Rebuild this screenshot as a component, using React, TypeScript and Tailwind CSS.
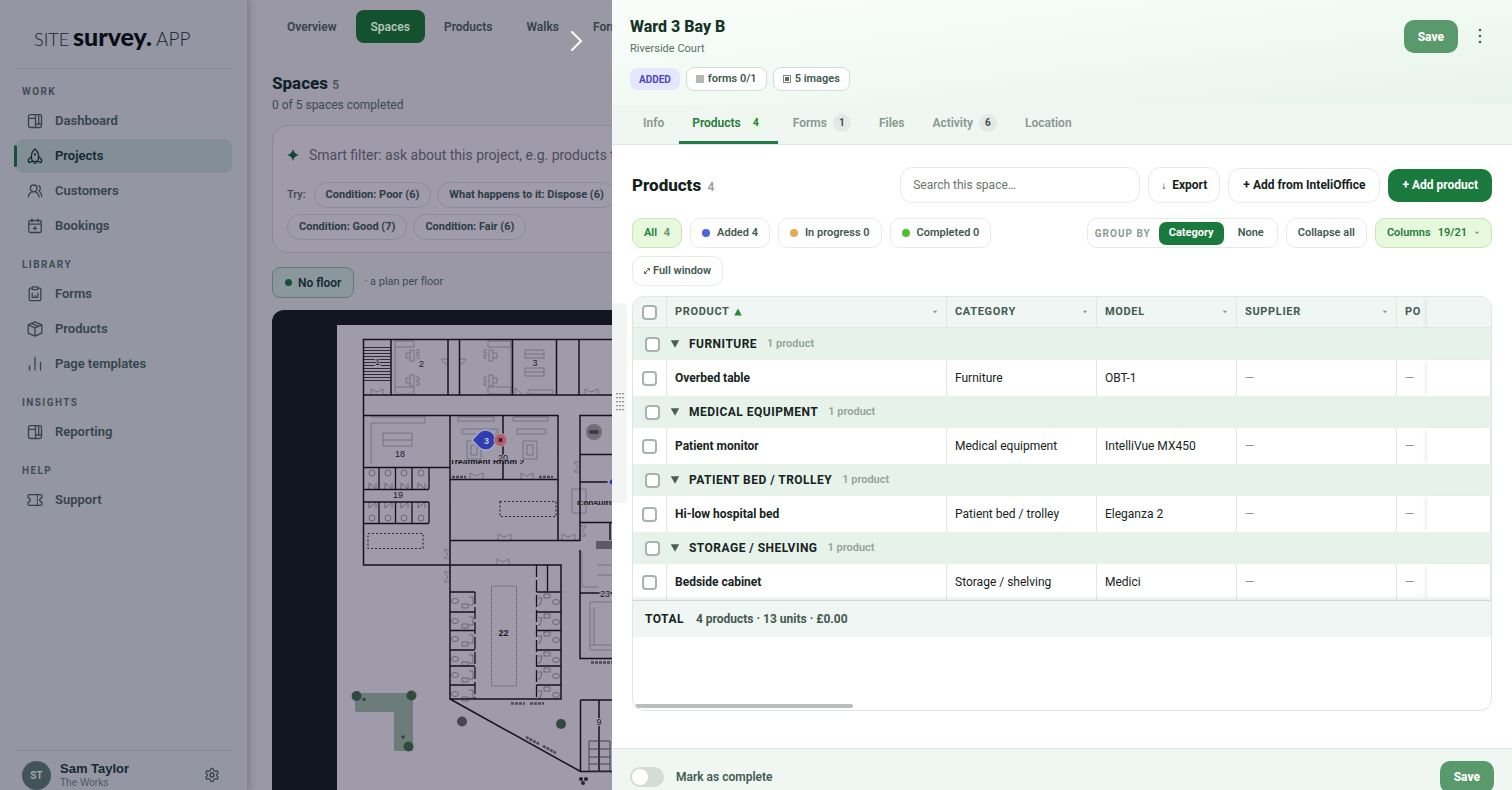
import type { ReactNode } from "react";
import clsx from "clsx";
import { Settings, UsersRound } from "lucide-react";

type NavItem = {
  label: string;
  icon: ReactNode;
  active?: boolean;
};

function LineIcon({ children }: { children: ReactNode }) {
  return (
    <svg
      viewBox="0 0 16 16"
      className="size-4"
      fill="none"
      stroke="currentColor"
      strokeWidth="1.3"
      strokeLinecap="round"
      strokeLinejoin="round"
      aria-hidden="true"
    >
      {children}
    </svg>
  );
}

const panelsIcon = (
  <LineIcon>
    <rect x="1.5" y="1.7" width="13" height="12.8" rx="1.8" />
    <path d="M8.5 1.7v12.8M1.5 5.3h7M8.5 11h3.2V1.7M11.7 11h2.8" />
  </LineIcon>
);

const rocketIcon = (
  <LineIcon>
    <path d="M8 .9C5.6 2.8 4.4 5.6 4.4 8.6c0 2 .5 3.7 1.1 4.9h5c.6-1.2 1.1-2.9 1.1-4.9C11.6 5.6 10.4 2.8 8 .9Z" />
    <path d="M4.5 8.4 1.8 11.2c-.5.6-.4 2.5.3 3.5l3.3-1.3M11.5 8.4l2.7 2.8c.5.6.4 2.5-.3 3.5l-3.3-1.3M7 15.2h2" />
    <circle cx="8" cy="6.5" r=".5" fill="currentColor" />
  </LineIcon>
);

const calendarIcon = (
  <LineIcon>
    <rect x="1.8" y="2.5" width="12.4" height="12" rx="1.6" />
    <path d="M1.8 6.2h12.4M5 .9v3M11 .9v3M8 8.6v3.4M6.3 10.3h3.4" />
  </LineIcon>
);

const clipboardIcon = (
  <LineIcon>
    <path d="M5 2.2H3.6c-.9 0-1.4.6-1.4 1.4v9.7c0 .9.6 1.4 1.4 1.4h8.8c.9 0 1.4-.6 1.4-1.400V3.6c0-.8-.5-1.4-1.400-1.4H11" />
    <rect x="5" y=".9" width="6" height="2.7" rx="1" />
    <path d="M5.200 7.400v4h5.600V7.400M8 9.600v1.800" />
  </LineIcon>
);

const boxIcon = (
  <LineIcon>
    <path d="M8 .8 14.8 3.800v8.400L8 15.200l-6.800-3V3.800ZM1.200 3.800 8 6.800l6.800-3M8 6.800v8.400M4.600 2.300l6.800 3" />
  </LineIcon>
);

const barsIcon = (
  <LineIcon>
    <path d="M2.500 10v4M8 1.500V14M13.500 6.500V14" />
  </LineIcon>
);

const usersIcon = <UsersRound className="size-4" strokeWidth={2} />;

const ticketIcon = (
  <LineIcon>
    <path d="M2.200 2.600h11.600c.7 0 1.100.5 1.100 1.100v2.200a2.100 2.100 0 0 0 0 4.200v2.200c0 .7-.4 1.100-1.100 1.100H2.200c-.7 0-1.100-.4-1.100-1.100v-2.200a2.100 2.100 0 0 0 0-4.200V3.700c0-.6.400-1.100 1.100-1.100Z" />
    <path d="M10.400 3v2M10.400 7v2M10.400 11v2" />
  </LineIcon>
);

const navSections: { title: string; items: NavItem[] }[] = [
  {
    title: "WORK",
    items: [
      { label: "Dashboard", icon: panelsIcon },
      { label: "Projects", icon: rocketIcon, active: true },
      { label: "Customers", icon: usersIcon },
      { label: "Bookings", icon: calendarIcon },
    ],
  },
  {
    title: "LIBRARY",
    items: [
      { label: "Forms", icon: clipboardIcon },
      { label: "Products", icon: boxIcon },
      { label: "Page templates", icon: barsIcon },
    ],
  },
  { title: "INSIGHTS", items: [{ label: "Reporting", icon: panelsIcon }] },
  { title: "HELP", items: [{ label: "Support", icon: ticketIcon }] },
];

const projectTabs = ["Overview", "Spaces", "Products", "Walks", "Forms"];

const suggestions = [
  "Condition: Poor (6)",
  "What happens to it: Dispose (6)",
  "Condition: Good (7)",
  "Condition: Fair (6)",
];

const drawerTabs = [
  { label: "Info" },
  { label: "Products", count: 4, active: true },
  { label: "Forms", count: 1 },
  { label: "Files" },
  { label: "Activity", count: 6 },
  { label: "Location" },
];

const statusFilters = [
  { label: "Added 4", dot: "bg-[#4a66e0]" },
  { label: "In progress 0", dot: "bg-[#e5ab52]" },
  { label: "Completed 0", dot: "bg-[#55c02c]" },
];

const columns = ["CATEGORY", "MODEL", "SUPPLIER"];

const groups = [
  { name: "FURNITURE", product: "Overbed table", category: "Furniture", model: "OBT-1" },
  { name: "MEDICAL EQUIPMENT", product: "Patient monitor", category: "Medical equipment", model: "IntelliVue MX450" },
  { name: "PATIENT BED / TROLLEY", product: "Hi-low hospital bed", category: "Patient bed / trolley", model: "Eleganza 2" },
  { name: "STORAGE / SHELVING", product: "Bedside cabinet", category: "Storage / shelving", model: "Medici" },
];

function Logo() {
  return (
    <svg viewBox="0 -6 160 42" className="h-[42px] w-40" role="img" aria-label="SITE survey. APP">
      <g fill="#1b1f2b" fontFamily="Lato">
        <text x="0" y="23" fontWeight="300" fontSize="18">SITE</text>
        <text x="39" y="23" fontWeight="900" fontSize="25" fill="#0a0c14">survey.</text>
        <text x="122" y="23" fontWeight="300" fontSize="19">APP</text>
      </g>
    </svg>
  );
}

function Sidebar() {
  return (
    <aside className="z-10 flex w-62 shrink-0 flex-col border-r border-[#858794] bg-[#9496a3] pr-[15px] pl-4 shadow-[2px_0_6px_rgba(40,40,60,0.25)]">
      <div className="flex h-[69px] shrink-0 items-center border-b border-[#838693] pt-2 pl-[18px]">
        <Logo />
      </div>
      <nav className="mt-[15px] flex flex-1 flex-col gap-3.5">
        {navSections.map((section) => (
          <div key={section.title}>
            <h2 className="mb-1 h-4 pl-1.5 text-[10px] leading-4 font-bold tracking-[0.14em] text-[#414c57]">
              {section.title}
            </h2>
            <ul className="flex flex-col gap-px">
              {section.items.map((item) => (
                <li key={item.label} className="relative">
                  {item.active && (
                    <span className="absolute top-1.5 -left-0.5 h-[22px] w-[3px] rounded-full bg-[#14523a]" />
                  )}
                  <a
                    href="#"
                    className={clsx(
                      "flex h-[34px] items-center gap-3 rounded-lg pl-[11px] text-[13px] font-semibold",
                      item.active ? "bg-[#848e97] text-[#122a32]" : "text-[#34444c]",
                    )}
                  >
                    {item.icon}
                    {item.label}
                  </a>
                </li>
              ))}
            </ul>
          </div>
        ))}
      </nav>
      <div className="flex h-10 shrink-0 items-start gap-2 border-t border-[#858894] pt-2.5 pl-1.5">
        <span className="flex size-[29px] shrink-0 items-center justify-center rounded-full bg-[#43535a] text-[10px] font-bold text-[#9ea5ae]">
          ST
        </span>
        <div className="pl-px font-['Liberation_Sans',sans-serif]">
          <p className="text-[13px] leading-4 font-bold text-[#16292f]">Sam Taylor</p>
          <p className="text-[10px] leading-3 text-[#4b5660]">The Works</p>
        </div>
        <button type="button" aria-label="Settings" className="mt-1.5 mr-3 ml-auto text-[#34444c]">
          <Settings className="size-4" />
        </button>
      </div>
    </aside>
  );
}

const cubicleRows = [592, 612, 630, 650, 666, 685];
const stallColumns = [363, 379, 395, 412];

function FloorPlan() {
  return (
    <svg
      viewBox="337 325 275 465"
      className="h-[465px] w-[275px] shrink-0 bg-[#9f9bab]"
      fontFamily="Liberation Sans"
      role="img"
      aria-label="Floor plan"
    >
      <g fill="none" stroke="#6b6977" strokeWidth="0.8">
        <path d="M395 341v52M395 341h19v6h-19M395 387h19v7h-19M488 341h23v6h-23zM488 387h23v7h-23zM511 341v52" />
        <path d="M410 350h4v11h-4zM410 353h-4v5h4M410 375h4v11h-4zM410 378h-4v5h4M489 350h4v11h-4zM493 353h4v5h-4M489 375h4v11h-4zM493 378h4v5h-4" />
        <path d="M416 350h3v3h-3M416 355h3v3h-3M416 377h3v3h-3M416 382h3v3h-3M487 350h-3v3h3M487 355h-3v3h3M487 377h-3v3h3M487 382h-3v3h3" />
        <path d="M525 350h19v8h-19zM525 354h19M525 368h19v8h-19zM525 372h19M528 390h25v4h-25z" />
        <path d="M371 417h54v6h-54v41M383 433h29v13h-29zM383 440h29M458 417h36v4h-36zM462 429h36v5h-36zM513 417h35v4h-35zM517 429h29v5h-29z" />
        <path d="M467 441h14v18h-14zM471 445h6v10h-6zM523 441h14v18h-14zM527 445h6v10h-6zM572 489h14v24h-14z" />
        <path d="M371 394v-5l6 3 6-3v5M448 359h-7l4 5h3M459 359h7l-4 5h-3M515 394v-6l7 6M585 394v-5l6 3 7-3v5M470 479v-6l6 3 7-3v6M521 479v-6l6 3 6-3v6M498 540v-6l6 3 7-3v6M562 540v-6l6 3 7-3v6M497 565v-6l6 3 6-3v6" />
        <path d="M450 550h-6l4 4-4 4h6M450 572h-6l4 5-4 5h6M580 462h-6l4 5-4 5h6M580 526h6l-4 5 4 5h-6" />
        <path d="M582 551v36h16M597 565h20v10h-20M590 602h25v48h-25zM594 607v38M590 645h25" />
        <rect x="491.5" y="586" width="25" height="100" stroke="#45434f" strokeDasharray="1 1" />
      </g>
      <g fill="none" stroke="#2f2d38" strokeWidth="1.2" strokeDasharray="2 2">
        <rect x="500" y="501.5" width="56" height="15" />
        <rect x="368" y="533.5" width="55" height="15" />
      </g>
      <g fill="none" stroke="#62606e" strokeWidth="0.9">
        {stallColumns.map((x) => (
          <g key={x}>
            <circle cx={x + 9} cy="473" r="3" />
            <circle cx={x + 9} cy="518" r="3" />
            <path d={`M${x + 6} 489v-6l7 6v-6M${x + 6} 502v6l7-6v6`} />
          </g>
        ))}
        {cubicleRows.map((y) => (
          <g key={y}>
            <ellipse cx="455" cy={y + 9} rx="3.5" ry="2.5" />
            <path d={`M462 ${y + 12}h6v4h-6zM469 ${y + 5}h4v8h-4`} />
            <ellipse cx="556" cy={y + 10} rx="3.5" ry="2.5" />
            <path d={`M544 ${y + 2}h6v4h-6zM538 ${y + 6}h4l-2 7h-2`} />
          </g>
        ))}
      </g>
      <path
        fill="none"
        stroke="#14131d"
        strokeWidth="1.5"
        d="M612 339.5H363.5V565H561V699H450V415M391 339.5V395M448 339.5V395M459.5 339.5V395M512.5 339.5V395M556.5 339.5V395M579 339.5V395M363.5 395H612M363.5 415.5H558V541M612 415.5H580V541M503 415.5V479M363.5 467.5H450M450 479.5H558M580 454.5H612M580 482H612M580 522.5H612M450 540.5H580M610 522v18M580 550V658.5H612M580 593H612M450 699 580.5 771.5H612M580.5 771.5V700M580.5 700H612M599 700V771"
      />
      <path
        fill="none"
        stroke="#14131d"
        strokeWidth="1.3"
        d="M363.5 489.5H429M363.5 502H429M363.5 523.5H429M379 467V489M395.5 467V489M412 467V489M429 467V489M379 502V523M395.5 502V523M412 502V523M429 502V523M547.5 565V592"
      />
      <path fill="none" stroke="#14131d" strokeWidth="1.3" strokeDasharray="12 3" d="M475 592V699M536.5 565V699" />
      <path
        fill="none"
        stroke="#14131d"
        strokeWidth="1.3"
        d="M450 592h25M450 612h25M450 630.5h25M450 650h25M450 666h25M450 685h25M536.5 592H561M536.5 612H561M536.5 630.5H561M536.5 650H561M536.5 666H561M536.5 685H561"
      />
      <path
        stroke="#2c2a36"
        strokeWidth="1"
        d="M364 347.5h27M364 350.5h27M364 353.5h27M364 356.5h27M364 359.5h27M364 362.5h27M364 365.5h27M364 368.5h27M364 371.5h27M364 374.5h27M364 377.5h27M364 380.5h27"
      />
      <path fill="none" stroke="#3b3945" strokeWidth="0.9" d="M589 741h21v30h-21zM589 749h21M589 757h21M589 764h21" />
      <path
        stroke="#4b4955"
        strokeWidth="2.5"
        strokeDasharray="3 1"
        d="M452 477h14M539 477h14M511 703.500h14M530 703.500h14M526 737l13 7M543 746l13 7M591 662.500h21"
      />
      <rect x="596" y="541" width="16" height="8" fill="#5b5967" />

      <circle cx="594" cy="432" r="8" fill="#706e79" />
      <rect x="589" y="430" width="10" height="4" rx="2" fill="#3c3a44" />

      <path d="M355 695q0-2 2-2h54q2 0 2 2v56h-17q-2 0-2-2v-37h-37q-2 0-2-2Z" fill="#6b7c7b" />
      <g fill="#33493f">
        <circle cx="356.5" cy="696" r="5" />
        <circle cx="411.5" cy="695.5" r="5" />
        <circle cx="408.5" cy="746.5" r="5" />
        <circle cx="561" cy="724" r="5" />
        <circle cx="364" cy="699.5" r="1.8" />
        <circle cx="403" cy="737" r="1.8" />
      </g>
      <circle cx="462" cy="721.5" r="5" fill="#474753" />
      <g fill="#23222c">
        <circle cx="581" cy="779" r="2" />
        <circle cx="586" cy="779" r="2" />
        <circle cx="583" cy="783" r="2" />
      </g>

      <g fill="#1b1a24" fontSize="9" textAnchor="middle" stroke="#9f9bab" strokeWidth="2" paintOrder="stroke">
        <text x="377.5" y="365">1</text>
        <text x="421.5" y="367">2</text>
        <text x="535" y="366">3</text>
        <text x="400" y="457">18</text>
        <text x="398" y="498">19</text>
        <text x="503" y="461">20</text>
        <text x="503.5" y="636" fontWeight="bold">22</text>
        <text x="605" y="597">23</text>
        <text x="599" y="725">9</text>
      </g>

      <clipPath id="label-band">
        <rect x="445" y="460" width="90" height="4" />
        <rect x="575" y="501" width="40" height="4" />
      </clipPath>
      <g clipPath="url(#label-band)" fill="#15141e" fontSize="8.5" fontWeight="bold">
        <text x="450" y="465">Treatment Room 2</text>
        <text x="577" y="506">Consulting</text>
      </g>

      <path
        d="M472 440l7-7.5a10 10 0 1 1 0 15Z"
        fill="#2f3db0"
        stroke="#a9a9c8"
        strokeWidth="1.5"
        strokeLinejoin="round"
      />
      <path d="M608 482l6-6v12Z" fill="#2f3db0" stroke="#a9a9c8" strokeWidth="1.2" />
      <text x="486.5" y="443.5" fontSize="9" fontWeight="bold" textAnchor="middle" fill="#c3c5de">3</text>
      <circle cx="500.5" cy="440" r="6.5" fill="#b55e6c" stroke="#a29eac" />
      <path d="M498.7 438.2l3.6 3.6M502.3 438.2l-3.6 3.6" stroke="#2a1820" strokeWidth="1.5" />
    </svg>
  );
}

function ProjectPage() {
  return (
    <main className="relative flex w-91 shrink-0 flex-col overflow-hidden bg-[#9998a4] pl-6 whitespace-nowrap">
      <nav className="flex gap-1 pt-2.5">
        {projectTabs.map((tab) => (
          <a
            key={tab}
            href="#"
            className={clsx(
              "flex h-[33px] shrink-0 items-center rounded-lg px-[15px] text-xs font-semibold",
              tab === "Spaces" ? "bg-[#14512f] text-[#b4c4bd]" : "text-[#34424b]",
            )}
          >
            {tab}
          </a>
        ))}
      </nav>
      <button type="button" aria-label="Close panel" className="absolute top-7 left-80">
        <svg viewBox="0 0 16 26" className="h-[26px] w-4" fill="none" stroke="#fff" strokeWidth="2" strokeLinecap="round">
          <path d="M4 4l9 9-9 9" />
        </svg>
      </button>

      <h1 className="mt-7 text-[17px] leading-6 font-extrabold text-[#10222a]">
        Spaces <span className="text-xs font-semibold text-[#4a5560]">5</span>
      </h1>
      <p className="mt-0.5 text-xs leading-4 text-[#3d4953]">0 of 5 spaces completed</p>

      <section className="mt-3 w-[480px] rounded-2xl border border-[#8a8997] bg-[#9f9bab] px-3.5 pt-[15px] pb-3">
        <div className="flex h-7 items-center gap-2.5">
          <svg viewBox="0 0 12 12" className="size-3" fill="#154536" aria-hidden="true">
            <path d="M6 0Q7 5 12 6 7 7 6 12 5 7 0 6 5 5 6 0Z" />
          </svg>
          <input
            type="text"
            aria-label="Smart filter"
            placeholder="Smart filter: ask about this project, e.g. products to replace"
            className="flex-1 bg-transparent text-sm text-[#4b4c5b] outline-none placeholder:text-[#4b4c5b]"
          />
        </div>
        <div className="mt-[13px] flex w-[340px] flex-wrap gap-x-1.5 gap-y-1.5">
          <span className="mr-0.5 flex h-[26px] items-center text-[11px] font-medium text-[#3d4953]">Try:</span>
          {suggestions.map((suggestion) => (
            <button
              key={suggestion}
              type="button"
              className="h-[26px] rounded-full border border-[#8c8a99] px-[11px] text-[11px] font-bold text-[#2c3d46]"
            >
              {suggestion}
            </button>
          ))}
        </div>
      </section>

      <div className="mt-3.5 flex items-center gap-2.5">
        <button
          type="button"
          className="flex h-[31px] items-center gap-1.5 rounded-lg border border-[#5f7c77] bg-[#8a979d] px-3 text-xs font-semibold text-[#142a30]"
        >
          <span className="size-[7px] rounded-full bg-[#175038]" />
          No floor
        </button>
        <span className="text-[11px] text-[#3f4955]">· a plan per floor</span>
      </div>

      <div className="mt-3 flex flex-1 overflow-hidden rounded-tl-xl bg-[#111622] pt-[15px] pl-[65px]">
        <FloorPlan />
      </div>
    </main>
  );
}

function Checkbox({ label }: { label: string }) {
  return (
    <input
      type="checkbox"
      aria-label={label}
      className="block size-[15px] shrink-0 appearance-none rounded-[4px] border-2 border-[#a8b3ae] bg-white checked:bg-[#1a7a3e]"
    />
  );
}

function DrawerHeader() {
  return (
    <header className="border-b border-[#e0e8e3]">
      <div className="flex h-[105px] justify-between bg-linear-to-br from-[#fafdfb] via-[#f1faf3] to-[#e8f3eb] px-[18px]">
        <div className="pt-4">
          <h2 className="text-base leading-[22px] font-extrabold text-[#143526]">Ward 3 Bay B</h2>
          <p className="mt-0.5 text-[11px] leading-[18px] text-[#5b6f65]">Riverside Court</p>
          <div className="mt-[9px] flex items-center gap-1.5 text-[11px] font-semibold">
            <span className="flex h-[22px] items-center rounded-lg bg-[#e4e7fd] px-[9px] text-[10px] font-bold text-[#4a49bd]">
              ADDED
            </span>
            <span className="flex h-6 items-center gap-1 rounded-lg border border-[#d3ddd7] bg-white px-[9px] text-[#3f5a4e]">
              <span className="size-2 bg-[#b3bab6]" />
              forms 0/1
            </span>
            <span className="flex h-6 items-center gap-1 rounded-lg border border-[#d3ddd7] bg-white px-[9px] text-[#3f5a4e]">
              <span className="flex size-2 items-center justify-center border border-[#7d8b84]">
                <span className="size-1 bg-[#5c6b64]" />
              </span>
              5 images
            </span>
          </div>
        </div>
        <div className="flex items-start gap-2 pt-5">
          <button type="button" className="h-[33px] rounded-[10px] bg-[#5a996c] px-3.5 text-xs font-extrabold text-white">
            Save
          </button>
          <button type="button" aria-label="More actions" className="flex h-8 w-7 items-center justify-center">
            <svg viewBox="0 0 4 16" className="h-4 w-1" fill="#4d5f56">
              <circle cx="2" cy="2" r="1.3" />
              <circle cx="2" cy="8" r="1.3" />
              <circle cx="2" cy="14" r="1.3" />
            </svg>
          </button>
        </div>
      </div>
      <nav className="flex h-[39px] gap-0.5 bg-[#f0f6f2] pl-[18px]">
        {drawerTabs.map((tab) => (
          <a
            key={tab.label}
            href="#"
            className={clsx(
              "flex items-center gap-1.5 border-b-[3px] px-[13px] text-xs font-semibold",
              tab.active ? "border-[#237a48] text-[#237a35]" : "border-transparent text-[#87988f]",
            )}
          >
            {tab.label}
            {tab.count && (
              <span
                className={clsx(
                  "flex size-[18px] items-center justify-center rounded-full text-[10px] font-bold",
                  tab.active ? "bg-[#eafae4] text-[#237a35]" : "bg-[#e3e9e5] text-[#3f5248]",
                )}
              >
                {tab.count}
              </span>
            )}
          </a>
        ))}
      </nav>
    </header>
  );
}

function Toolbar() {
  return (
    <>
      <div className="flex h-9 items-center gap-2 text-xs font-bold text-[#14231c]">
        <h3 className="mr-auto text-[17px] font-extrabold text-[#12211b]">
          Products <span className="ml-0.5 text-xs font-semibold text-[#93a199]">4</span>
        </h3>
        <input
          type="search"
          aria-label="Search this space"
          placeholder="Search this space…"
          className="h-9 w-60 rounded-xl border border-[#e6ebe8] bg-white px-3 font-normal outline-none placeholder:text-[#6a756f]"
        />
        <button type="button" className="h-9 rounded-xl border border-[#e6ebe8] bg-white px-3">
          <span className="mr-1.5 text-[10px]">↓</span>Export
        </button>
        <button type="button" className="h-[35px] rounded-xl border border-[#e6ebe8] bg-white px-3.5">
          + Add from InteliOffice
        </button>
        <button type="button" className="h-[33px] rounded-[10px] bg-[#1a7a3e] px-3.5 text-white">
          + Add product
        </button>
      </div>

      <div className="mt-[15px] flex flex-wrap items-center gap-2 text-[11px] font-semibold text-[#435a4f]">
        <button type="button" className="h-[30px] rounded-[10px] border border-[#c4e6b8] bg-[#e6f9dd] px-[11px] text-[#237a35]">
          All <span className="ml-1 text-[#63926b]">4</span>
        </button>
        {statusFilters.map((filter) => (
          <button
            key={filter.label}
            type="button"
            className="flex h-[30px] items-center gap-[7px] rounded-[10px] border border-[#e6ebe8] bg-white px-[11px]"
          >
            <span className={clsx("size-2 rounded-full", filter.dot)} />
            {filter.label}
          </button>
        ))}
        <div className="ml-auto flex h-[30px] items-center rounded-[10px] border border-[#e6ebe8] bg-white px-[7px]">
          <span className="mr-2 text-[10px] font-bold tracking-[0.1em] text-[#8d9c94]">GROUP BY</span>
          <button type="button" className="h-[23px] rounded-[7px] bg-[#1a7a3e] px-2.5 font-bold text-white">
            Category
          </button>
          <button type="button" className="pr-1.5 pl-3.5">
            None
          </button>
        </div>
        <button type="button" className="h-[30px] rounded-[10px] border border-[#e6ebe8] bg-white px-[11px]">
          Collapse all
        </button>
        <button
          type="button"
          className="flex h-[30px] items-center gap-[7px] rounded-[10px] border border-[#c4e6b8] bg-[#e6f9dd] px-[11px] text-[#2b7a3c]"
        >
          Columns <span>19/21</span>
          <SortCaret />
        </button>
        <button
          type="button"
          className="flex h-[30px] items-center gap-[3px] rounded-[10px] border border-[#e6ebe8] bg-white px-[11px]"
        >
          <svg viewBox="0 0 6 6" className="size-1.5" fill="none" stroke="currentColor" strokeWidth="0.9" aria-hidden="true">
            <path d="M.6 5.400 5.400.6M3.200.6h2.200v2.200M.6 3.200v2.200h2.200" />
          </svg>
          Full window
        </button>
      </div>
    </>
  );
}

function SortCaret() {
  return (
    <svg viewBox="0 0 6 4" className="h-1 w-1.5 shrink-0" fill="#8a9a91" aria-hidden="true">
      <path d="M.8.8h4.400L3 3.200Z" />
    </svg>
  );
}

function ProductTable() {
  const head = "border-r border-b border-[#dfe8e3] bg-[#f0f6f3] px-2 text-left font-bold";
  const checkHead = "border-r border-b border-[#dfe8e3] bg-[#f0f6f3] pl-[9px]";
  const cell = "border-r border-[#e2e8e4] px-2";

  return (
    <div className="mt-2.5 flex flex-1 flex-col overflow-hidden rounded-xl border border-[#e0e7e3] bg-white">
      <table className="w-full table-fixed border-separate border-spacing-0 text-xs text-[#16241d]">
        <colgroup>
          <col className="w-[34px]" />
          <col className="w-[280px]" />
          <col className="w-[150px]" />
          <col className="w-[140px]" />
          <col className="w-[160px]" />
          <col className="w-[30px]" />
          <col />
        </colgroup>
        <thead className="text-[11px] tracking-[0.06em] text-[#435a4f]">
          <tr className="h-[31px]">
            <th className={checkHead}>
              <Checkbox label="Select all" />
            </th>
            <th className={head}>
              <div className="flex items-center gap-1">
                PRODUCT
                <svg viewBox="0 0 8 8" className="size-2" fill="#2c8a35" aria-hidden="true">
                  <path d="M4 .5 7.800 7.500H.2Z" />
                </svg>
                <span className="ml-auto">
                  <SortCaret />
                </span>
              </div>
            </th>
            {columns.map((column) => (
              <th key={column} className={head}>
                <div className="flex items-center justify-between">
                  {column}
                  <SortCaret />
                </div>
              </th>
            ))}
            <th className="border-b border-[#dfe8e3] bg-[#f0f6f3] pl-2 text-left font-bold">PO</th>
            <th className="border-b border-[#dfe8e3] bg-[#f0f6f3] shadow-[-3px_0_4px_-2px_rgba(30,60,45,0.12)]" />
          </tr>
        </thead>
        {groups.map((group) => (
          <tbody key={group.name}>
            <tr className="h-8">
              <th colSpan={7} className="bg-[#e7f2eb] pl-3 text-left">
                <div className="flex items-center">
                  <Checkbox label={`Select ${group.name}`} />
                  <button type="button" className="ml-2.5 flex items-center gap-[9px] font-bold tracking-[0.04em]">
                    <svg viewBox="0 0 10 8" className="h-2 w-2.5" fill="#4b5f55" aria-hidden="true">
                      <path d="M.8.3h8.400L5 7.700Z" />
                    </svg>
                    {group.name}
                  </button>
                  <span className="ml-2.5 text-[11px] font-semibold text-[#93a39a]">1 product</span>
                </div>
              </th>
            </tr>
            <tr className="h-9">
              <td className="border-r border-[#e2e8e4] pl-[9px]">
                <Checkbox label={`Select ${group.product}`} />
              </td>
              <td className={clsx(cell, "font-bold")}>{group.product}</td>
              <td className={cell}>{group.category}</td>
              <td className={cell}>{group.model}</td>
              <td className={clsx(cell, "text-[#8b9690]")}>—</td>
              <td className="pl-2 text-[#8b9690]">—</td>
              <td className="border-r border-[#e2e8e4] shadow-[-3px_0_4px_-2px_rgba(30,60,45,0.12)]" />
            </tr>
          </tbody>
        ))}
        <tfoot>
          <tr className="h-[37px]">
            <td
              colSpan={7}
              className="border-t border-[#d0d8d4] bg-[#f0f6f3] pl-3 font-bold text-[#435a4f] shadow-[0_-2px_4px_rgba(30,60,45,0.1)]"
            >
              <span className="mr-3 tracking-[0.04em] text-[#16241d]">TOTAL</span>
              4 products · 13 units · £0.00
            </td>
          </tr>
        </tfoot>
      </table>
      <div className="mt-auto mb-0.5 ml-0.5 h-1 w-[218px] rounded-full bg-[#bcbfbd]" />
    </div>
  );
}

function SpaceDrawer() {
  return (
    <section className="relative z-20 flex min-w-0 flex-1 flex-col bg-white">
      <DrawerHeader />
      <div className="absolute top-[303px] left-0 flex h-[200px] w-[15px] items-center justify-center rounded-r-sm bg-[#f3f4f4]">
        <svg
          viewBox="0 0 8 22"
          className="h-[22px] w-2"
          stroke="#4a4f4d"
          strokeWidth="1.2"
          strokeDasharray="1.2 2.8"
          aria-hidden="true"
        >
          <path d="M1 1v20M4 1v20M7 1v20" />
        </svg>
      </div>
      <div className="flex flex-1 flex-col px-5 pt-[22px] pb-[37px]">
        <Toolbar />
        <ProductTable />
      </div>
      <footer className="flex h-[42px] shrink-0 items-start border-t border-[#e0e8e3] bg-[#f0f6f2] px-[18px] pt-3">
        <label className="mt-1.5 flex items-center gap-3 text-xs leading-5 font-semibold text-[#435a4f]">
          <input
            type="checkbox"
            role="switch"
            className="h-5 w-[34px] appearance-none rounded-full bg-[#d5dcd8] before:block before:size-4 before:translate-x-0.5 before:translate-y-0.5 before:rounded-full before:bg-white"
          />
          Mark as complete
        </label>
        <button type="button" className="ml-auto h-8 rounded-[10px] bg-[#5a996c] px-3.5 text-xs font-extrabold text-white">
          Save
        </button>
      </footer>
    </section>
  );
}

export default function App() {
  return (
    <div className="flex h-screen overflow-hidden font-[Roboto,sans-serif]">
      <Sidebar />
      <ProjectPage />
      <SpaceDrawer />
    </div>
  );
}
